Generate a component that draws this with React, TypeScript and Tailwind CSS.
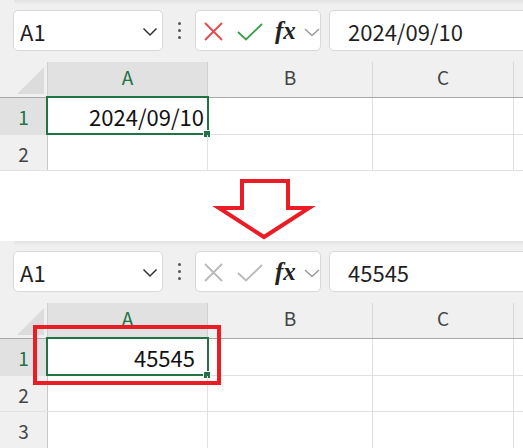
import React from "react";

const FONT = { fontFamily: '"Noto Sans CJK JP", "Noto Sans", sans-serif' };

function Toolbar({ value, active }: { value: string; active: boolean }) {
  const xColor = active ? "#e5484d" : "#b9b9b9";
  const cColor = active ? "#3b9e4d" : "#b9b9b9";
  return (
    <div className="relative flex h-[62px] items-start overflow-hidden bg-[#f0f0f0] pt-[10px] pl-[13px]">
      <div className="absolute left-[14px] right-0 top-0 h-[5px] rounded-bl-[4px] bg-gradient-to-b from-[#e2e2e2] to-[#f0f0f0]" />
      <div className="relative flex h-[41px] w-[150px] shrink-0 items-center rounded-[5px] border border-[#d8d8d8] bg-white pl-[6px]">
        <span className="text-[22px] leading-none text-[#1f1f1f]">A1</span>
        <svg className="absolute left-[128px] top-[16px]" width="16" height="10" viewBox="0 0 16 10">
          <path d="M1.5 1.5 L8 8 L14.5 1.5" fill="none" stroke="#333" strokeWidth="1.5" />
        </svg>
      </div>
      <div className="flex h-[41px] w-[32px] shrink-0 flex-col items-center justify-center gap-[4px]">
        <div className="h-[3px] w-[3px] rounded-full bg-[#555]" />
        <div className="h-[3px] w-[3px] rounded-full bg-[#555]" />
        <div className="h-[3px] w-[3px] rounded-full bg-[#555]" />
      </div>
      <div className="relative h-[41px] w-[126px] shrink-0 rounded-[5px] border border-[#d8d8d8] bg-white">
        <svg className="absolute left-0 top-0" width="126" height="41" viewBox="0 0 126 41">
          <path d="M9 12 L26 29 M26 12 L9 29" stroke={xColor} strokeWidth="1.8" fill="none" />
          <path d="M42 21 L50 28.5 L66 13" stroke={cColor} strokeWidth="1.8" fill="none" />
          <path d="M109 18 L116 24.5 L123 18" stroke="#9a9a9a" strokeWidth="1.5" fill="none" />
        </svg>
        <span
          className="absolute left-[79px] top-[7px] text-[25px] font-bold italic leading-none text-[#222]"
          style={{ fontFamily: '"Liberation Serif", "DejaVu Serif", serif' }}
        >
          fx
        </span>
      </div>
      <div className="ml-[8px] flex h-[41px] w-[230px] shrink-0 items-center rounded-[5px] border border-[#d8d8d8] bg-white pl-[18px]">
        <span className="text-[22px] leading-none text-[#1f1f1f]">{value}</span>
      </div>
    </div>
  );
}

function Grid({ cellText, padRight, rows }: { cellText: string; padRight: number; rows: number[] }) {
  return (
    <div className="flex flex-col">
      <div className="flex h-[36px] border-b border-[#a9a9a9] bg-[#f0f0f0]">
        <div className="relative w-[48px] shrink-0 border-r border-[#d0d0d0]">
          <svg className="absolute left-0 top-0" width="47" height="35" viewBox="0 0 47 35">
            <polygon points="17,32 44,32 44,5" fill="#dcdcdc" />
          </svg>
        </div>
        <div className="flex w-[160px] shrink-0 items-start justify-center border-r border-[#d0d0d0] bg-[#e1e1e1] pt-[1px] text-[19px] text-[#217346]">A</div>
        <div className="flex w-[165px] shrink-0 items-start justify-center border-r border-[#d8d8d8] pt-[1px] text-[19px] text-[#444]">B</div>
        <div className="flex w-[141px] shrink-0 items-start justify-center border-r border-[#d8d8d8] pt-[1px] text-[19px] text-[#444]">C</div>
        <div className="flex-1" />
      </div>
      {rows.map((h, i) => (
        <div key={i} className="flex border-b border-[#e1e1e1] bg-white" style={{ height: h }}>
          <div
            className={
              "flex w-[48px] shrink-0 items-center justify-center border-r border-[#c8c8c8] pt-[3px] text-[19px] " +
              (i === 0 ? "bg-[#e1e1e1] text-[#217346]" : "bg-[#f0f0f0] text-[#444]")
            }
          >
            {i + 1}
          </div>
          <div className="relative flex w-[160px] shrink-0 items-center justify-end border-r border-[#e1e1e1]">
            {i === 0 && (
              <>
                <div className="absolute left-[-2px] top-[-2px] bottom-[-1px] right-[-2px] border-2 border-[#217346]" />
                <div className="absolute bottom-[-3px] right-[-3px] h-[6px] w-[6px] bg-[#217346] outline outline-1 outline-white" />
                <span className="text-[22px] leading-none text-[#111]" style={{ paddingRight: padRight }}>
                  {cellText}
                </span>
              </>
            )}
          </div>
          <div className="w-[165px] shrink-0 border-r border-[#e1e1e1]" />
          <div className="w-[141px] shrink-0 border-r border-[#e1e1e1]" />
          <div className="flex-1" />
        </div>
      ))}
    </div>
  );
}

export default function App() {
  return (
    <div className="relative h-[448px] w-[523px] overflow-hidden bg-white" style={FONT}>
      <div className="overflow-hidden">
        <Toolbar value="2024/09/10" active={true} />
        <Grid cellText="2024/09/10" padRight={3} rows={[37, 36]} />
      </div>
      <div className="relative h-[70px]">
        <svg className="absolute left-0 top-0" width="523" height="70" viewBox="0 0 523 70">
          <polygon
            points="242,10 288,10 288,37 309,37 264,66 219,37 242,37"
            fill="none"
            stroke="#ec1c24"
            strokeWidth="4"
            strokeLinejoin="miter"
          />
        </svg>
      </div>
      <div className="relative overflow-hidden">
        <Toolbar value="45545" active={false} />
        <Grid cellText="45545" padRight={12} rows={[37, 36, 37]} />
        <div className="absolute left-[33px] top-[84px] h-[60px] w-[188px] border-4 border-[#ec1c24]" />
      </div>
    </div>
  );
}
